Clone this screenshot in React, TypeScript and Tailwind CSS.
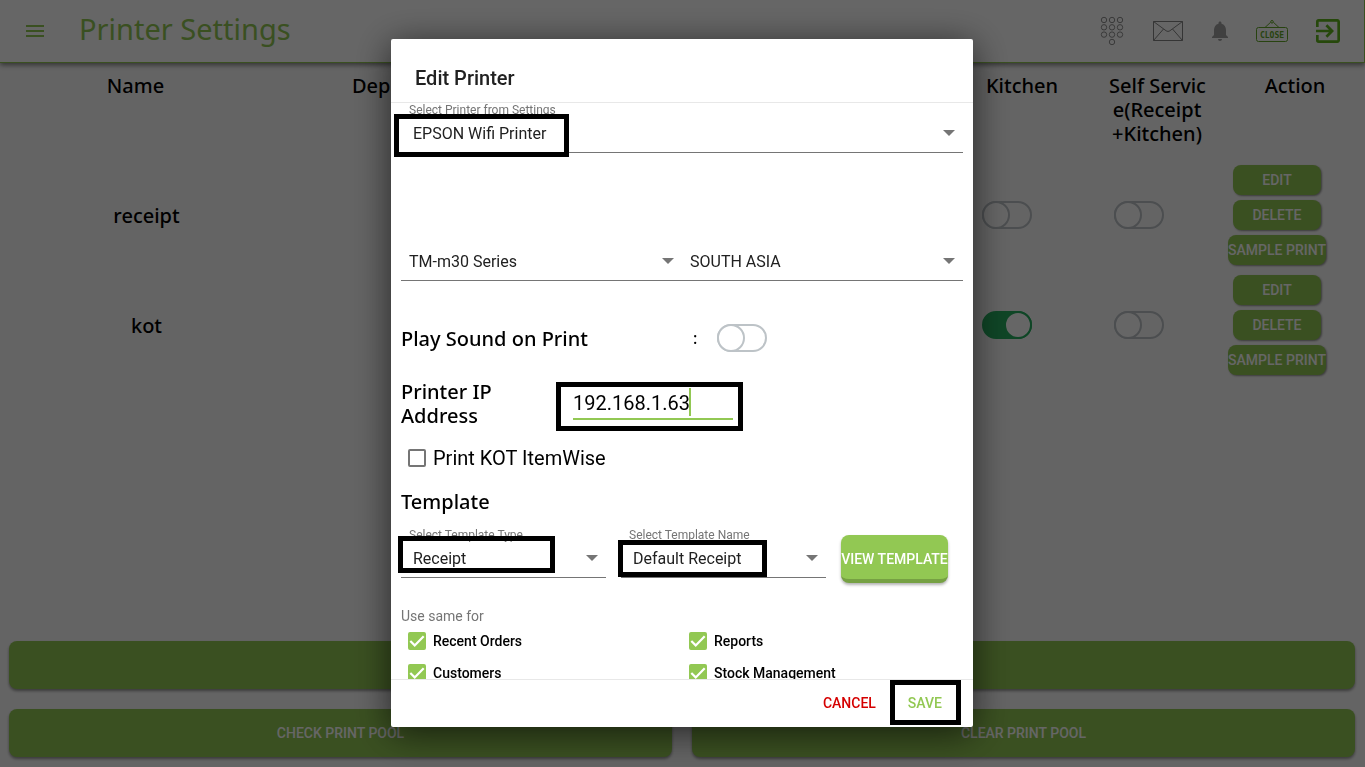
import { ReactNode, useState } from 'react';
import clsx from 'clsx';
import { MdExitToApp, MdMenu, MdNotifications } from 'react-icons/md';

const heading = "font-['Noto_Sans',sans-serif] font-medium text-xl leading-6";

const Toggle = ({
  label,
  defaultChecked = false,
}: {
  label: string;
  defaultChecked?: boolean;
}) => (
  <label className="relative inline-block h-7 w-[50px] cursor-pointer align-top">
    <input
      type="checkbox"
      aria-label={label}
      defaultChecked={defaultChecked}
      className="peer block h-7 w-[50px] appearance-none rounded-full border-2 border-[#bdc3c7] checked:border-[#27ae60] checked:bg-[#27ae60]"
    />
    <span className="pointer-events-none absolute top-0 left-0 h-7 w-7 rounded-full border-2 border-[#bdc3c7] bg-white peer-checked:left-[22px] peer-checked:border-[#27ae60]" />
  </label>
);

const Tick = ({
  label,
  defaultChecked = false,
  large = false,
}: {
  label: string;
  defaultChecked?: boolean;
  large?: boolean;
}) => (
  <label
    className={clsx(
      'flex items-center gap-[7px] pl-[7px]',
      large ? 'text-xl leading-6' : 'h-8 text-sm font-medium'
    )}
  >
    <span className="relative flex">
      <input
        type="checkbox"
        defaultChecked={defaultChecked}
        className="peer h-[18px] w-[18px] appearance-none rounded-xs border-2 border-[#757575] checked:border-[#92c853] checked:bg-[#92c853]"
      />
      <svg
        viewBox="0 0 18 18"
        className="pointer-events-none absolute inset-0 hidden h-[18px] w-[18px] peer-checked:block"
        fill="none"
        stroke="#fff"
        strokeWidth="2.2"
      >
        <path d="M2.3 9 6.7 13.4 15.7 4.2" />
      </svg>
    </span>
    {label}
  </label>
);

// Thick black frame that marks the fields to fill in
const Highlight = ({ className }: { className: string }) => (
  <span
    aria-hidden="true"
    className={clsx(
      'pointer-events-none absolute border-5 border-black',
      className
    )}
  />
);

const SelectField = ({
  label,
  value,
  hideLabel = false,
  children,
}: {
  label: string;
  value: string;
  hideLabel?: boolean;
  children?: ReactNode;
}) => (
  <label className="relative block min-w-0 flex-1">
    {!hideLabel && (
      <span className="block h-[10px] pl-2 text-xs leading-[14px] whitespace-nowrap text-[#757575]">
        {label}
      </span>
    )}
    <span className="relative block">
      <select
        aria-label={label}
        defaultValue={value}
        className={clsx(
          'block h-10 w-full appearance-none border-b border-[#757575] pt-0.5 text-base text-[#212121] outline-none',
          hideLabel ? 'pl-2' : 'pl-3'
        )}
      >
        <option>{value}</option>
      </select>
      <svg
        viewBox="0 0 12 6"
        className="pointer-events-none absolute top-[17px] right-2 h-[6px] w-3"
        fill="#757575"
      >
        <path d="M0 0h12L6 6z" />
      </svg>
    </span>
    {children}
  </label>
);

const rowButton =
  'h-[30px] rounded-lg bg-[#92c853] text-sm font-medium text-white whitespace-nowrap shadow-[1px_1px_2px_rgba(0,0,0,0.4)]';
const wideButton =
  'h-12 flex-1 rounded-lg bg-[#92c853] text-sm font-medium text-white shadow-[0_2px_3px_rgba(0,0,0,0.4)]';

const printers = [
  { name: 'receipt', kitchen: false, selfService: false },
  { name: 'kot', kitchen: true, selfService: false },
];

const KeypadIcon = () => (
  <svg viewBox="0 0 24 30" className="h-[30px] w-6" fill="none" stroke="#909090">
    {[4, 11.3, 18.6].map((cy) =>
      [4, 12, 20].map((cx) => (
        <circle key={`${cx}-${cy}`} cx={cx} cy={cy} r="2.7" />
      ))
    )}
    <circle cx="12" cy="26" r="2.7" />
  </svg>
);

const MailIcon = () => (
  <svg viewBox="0 0 30 20" className="h-5 w-[30px]" fill="none" stroke="#858585">
    <path d="M.5.5h29v19H.5zM.5.5 13 9.700c1.200.9 2.800.9 4 0L29.500.5M.5 19.500l10-11.500M29.500 19.500l-10-11.500" />
  </svg>
);

const CloseSignIcon = () => (
  <svg viewBox="0 0 32 22" className="h-[22px] w-8" fill="none" stroke="#64a82a">
    <rect x=".5" y="7.5" width="31" height="14" rx="2" />
    <path d="M9 7.5 14.6 2.3M17.4 2.3 23 7.5" />
    <circle cx="16" cy="1.8" r="1.3" />
    <text
      x="16"
      y="18"
      textAnchor="middle"
      stroke="none"
      fill="#64a82a"
      className="font-['DejaVu_Sans_Mono',monospace] text-[8px] font-bold"
    >
      CLOSE
    </text>
  </svg>
);

const ExitIcon = MdExitToApp;

const Header = () => (
  <header className="relative flex h-[63px] items-center border-r border-b border-[#92c853] bg-white pr-5 pl-[23px] shadow-[0_2px_5px_rgba(0,0,0,0.5)]">
    <button aria-label="Menu" className="text-[#92c853]">
      <MdMenu size={24} />
    </button>
    <h1 className="ml-8 pb-[5px] font-['Noto_Sans',sans-serif] text-[29px] leading-9 text-[#92c853]">
      Printer Settings
    </h1>
    <nav className="ml-auto flex items-center">
      <button aria-label="Keypad">
        <KeypadIcon />
      </button>
      <button aria-label="Messages" className="ml-[29px]">
        <MailIcon />
      </button>
      <button aria-label="Notifications" className="ml-[25px] text-[#a0a0a0]">
        <MdNotifications size={24} />
      </button>
      <button aria-label="Close shop" className="ml-6">
        <CloseSignIcon />
      </button>
      <button aria-label="Exit" className="ml-6 text-[#5fb41c]">
        <ExitIcon size={32} />
      </button>
    </nav>
  </header>
);

const PrinterTable = () => (
  <table className={clsx('w-full table-fixed text-center', heading)}>
    <thead>
      <tr className="h-[97px] align-top">
        <th className="w-[293px] pt-[11px] pr-[22px] font-medium">Name</th>
        <th className="pt-[11px] pl-[59px] text-left font-medium">
          Department
        </th>
        <th className="w-[132px] pt-[11px] pl-[30px] font-medium">Kitchen</th>
        <th className="w-[132px] pt-[11px] pl-9 font-medium whitespace-nowrap">
          Self Servic
          <br />
          e(Receipt
          <br />
          +Kitchen)
        </th>
        <th className="w-40 pt-[11px] pl-5 font-medium">Action</th>
      </tr>
    </thead>
    <tbody>
      {printers.map(({ name, kitchen, selfService }) => (
        <tr key={name} className="h-[110px]">
          <td className="pt-0.5">{name}</td>
          <td />
          <td>
            <Toggle label={`${name} kitchen`} defaultChecked={kitchen} />
          </td>
          <td>
            <Toggle label={`${name} self service`} defaultChecked={selfService} />
          </td>
          <td className="pr-4">
            <div className="flex flex-col items-center gap-[5px] font-[Roboto,sans-serif]">
              <button className={clsx(rowButton, 'w-[88px]')}>EDIT</button>
              <button className={clsx(rowButton, 'w-[88px]')}>DELETE</button>
              <button className={clsx(rowButton, 'w-[98px]')}>
                SAMPLE PRINT
              </button>
            </div>
          </td>
        </tr>
      ))}
    </tbody>
  </table>
);

const EditPrinterDialog = () => {
  const [ip, setIp] = useState('192.168.1.63');

  return (
    <div className="fixed inset-0 flex justify-center bg-black/60 pt-[39px] pr-px pb-10">
      <div
        role="dialog"
        aria-modal="true"
        aria-labelledby="dialog-title"
        className="flex w-full max-w-[582px] flex-col rounded-xs bg-white shadow-[0_6px_36px_rgba(0,0,0,0.65)]"
      >
        <h2
          id="dialog-title"
          className="border-b border-[#e8e8e8] px-6 pt-[27px] pb-3 text-xl leading-6 font-medium text-[#212121]"
        >
          Edit Printer
        </h2>

        <div className="min-h-0 flex-1 overflow-y-auto px-[10px] [scrollbar-width:none]">
          <SelectField label="Select Printer from Settings" value="EPSON Wifi Printer">
            <Highlight className="top-[11px] -left-[7px] h-[43px] w-[175px]" />
          </SelectField>

          <div className="mt-[88px] flex">
            <SelectField label="Series" value="TM-m30 Series" hideLabel />
            <SelectField label="Region" value="SOUTH ASIA" hideLabel />
          </div>

          <div className="mt-[43px] flex h-7 items-center">
            <span className={clsx('w-[292px] pt-0.5', heading)}>
              Play Sound on Print
            </span>
            <span className="w-6 font-['Noto_Sans',sans-serif] text-base font-medium">
              :
            </span>
            <Toggle label="Play Sound on Print" />
          </div>

          <div className="mt-7 flex items-center">
            <label htmlFor="printer-ip" className={clsx('w-[155px] pr-8', heading)}>
              Printer IP Address
            </label>
            <div className="relative px-[17px]">
              <input
                id="printer-ip"
                value={ip}
                onChange={(e) => setIp(e.target.value)}
                className="block h-8 w-40 border-b-2 border-[#92c853] text-xl outline-none"
              />
              <span
                aria-hidden="true"
                className="absolute top-0 left-[133px] h-7 w-[2px] bg-[#92c853]"
              />
              <Highlight className="-top-[6px] left-0 h-[49px] w-[187px]" />
            </div>
          </div>

          <div className="mt-[18px]">
            <Tick label="Print KOT ItemWise" large />
          </div>

          <h3 className={clsx('mt-5', heading)}>Template</h3>

          <div className="mt-[14px] flex items-start gap-[15px] pr-[15px]">
            <SelectField label="Select Template Type" value="Receipt">
              <Highlight className="top-2 -left-[3px] h-[37px] w-[157px]" />
            </SelectField>
            <SelectField label="Select Template Name" value="Default Receipt">
              <Highlight className="top-3 -left-[3px] h-[37px] w-[149px]" />
            </SelectField>
            <button className="mt-[7px] h-12 w-[107px] rounded-lg border-b-4 border-[#76a143] bg-[#92c853] pt-1 text-sm font-medium whitespace-nowrap text-white shadow-[0_2px_3px_rgba(0,0,0,0.3)]">
              VIEW TEMPLATE
            </button>
          </div>

          <fieldset className="mt-6">
            <legend className="text-sm leading-[18px] text-[#757575]">
              Use same for
            </legend>
            <div className="grid grid-cols-2">
              <Tick label="Recent Orders" defaultChecked />
              <Tick label="Reports" defaultChecked />
              <Tick label="Customers" defaultChecked />
              <Tick label="Stock Management" defaultChecked />
            </div>
          </fieldset>
        </div>

        <div className="flex h-12 items-center justify-end gap-8 border-t border-[#e8e8e8] pr-[31px] pb-0.5 text-sm font-medium">
          <button className="text-[#d50000]">CANCEL</button>
          <button className="relative text-[#92c853]">
            SAVE
            <Highlight className="-top-[13px] -left-[18px] h-[45px] w-[71px]" />
          </button>
        </div>
      </div>
    </div>
  );
};

export default function App() {
  return (
    <div className="flex min-h-screen flex-col bg-[#fafafa] font-[Roboto,sans-serif] text-black">
      <Header />
      <PrinterTable />
      <footer className="mt-auto flex flex-col gap-5 pr-[10px] pb-[10px] pl-[9px]">
        <div className="flex">
          <button aria-label="Add printer" className={wideButton} />
        </div>
        <div className="flex gap-5">
          <button className={wideButton}>CHECK PRINT POOL</button>
          <button className={wideButton}>CLEAR PRINT POOL</button>
        </div>
      </footer>
      <EditPrinterDialog />
    </div>
  );
}
